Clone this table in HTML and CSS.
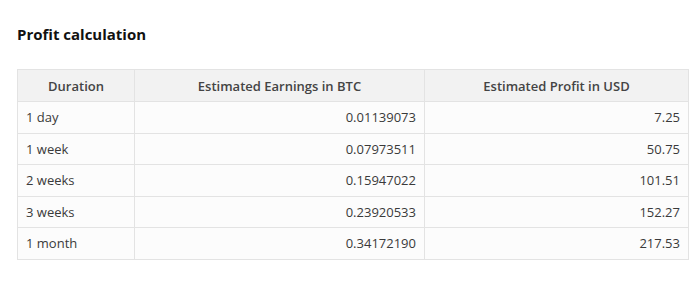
FILE: index.html
```html
<!DOCTYPE html>
<html>
    <head>
        <meta name="viewport" content="width=device-width, initial-scale=1"/>
        <link rel="stylesheet" href="styles.css">
    </head>
    <body>
        <div class="profit">
            <div class="profit__title">Profit calculation</div>
            <table class="profit__table">
                <colgroup>
                    <col class="profit__col-duration">
                    <col class="profit__col-btc">
                    <col class="profit__col-usd">
                </colgroup>
                <thead>
                    <tr>
                        <th>Duration</th>
                        <th>Estimated Earnings in BTC</th>
                        <th>Estimated Profit in USD</th>
                    </tr>
                </thead>
                <tbody>
                    <tr><td>1 day</td><td class="num">0.01139073</td><td class="num">7.25</td></tr>
                    <tr><td>1 week</td><td class="num">0.07973511</td><td class="num">50.75</td></tr>
                    <tr><td>2 weeks</td><td class="num">0.15947022</td><td class="num">101.51</td></tr>
                    <tr><td>3 weeks</td><td class="num">0.23920533</td><td class="num">152.27</td></tr>
                    <tr><td>1 month</td><td class="num">0.34172190</td><td class="num">217.53</td></tr>
                </tbody>
            </table>
        </div>
    </body>
</html>
```

FILE: styles.css
```css
body, html {
    margin: 0;
    box-sizing: border-box;
    font-family: "Open Sans", sans-serif;
    font-size: 13px;
    -webkit-font-smoothing: antialiased;
    color: #3a3a3a;
    background-color: #fff;
}

* {
    box-sizing: border-box;
}

.profit {
    padding: 23px 12px 0 17px;
}

.profit__title {
    font-size: 15px;
    font-weight: bold;
    color: #111;
    line-height: 22px;
    margin-bottom: 24px;
}

.profit__table {
    width: 671px;
    border-collapse: collapse;
    table-layout: fixed;
    background-color: #fcfcfc;
}

.profit__col-duration {
    width: 117px;
}

.profit__col-btc {
    width: 290px;
}

.profit__col-usd {
    width: 264px;
}

.profit__table th,
.profit__table td {
    border: 1px solid #e3e3e3;
    height: 31.5px;
    padding: 0 8px;
    font-weight: normal;
}

.profit__table th {
    height: 32px;
    background-color: #f2f2f2;
    font-weight: 600;
    color: #444;
    text-align: center;
}

.profit__table td.num {
    text-align: right;
}
```
